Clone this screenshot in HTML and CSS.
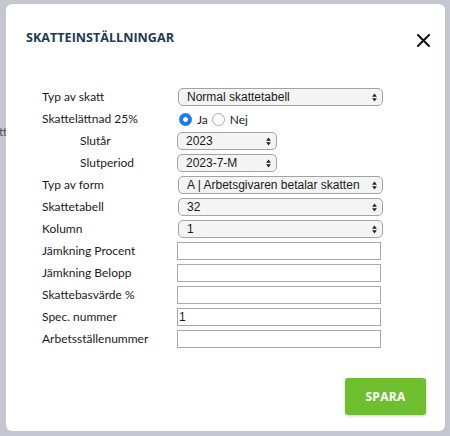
FILE: index.html
```html
<!DOCTYPE html>
<html lang="sv">
<head>
<meta charset="utf-8">
<title>Skatteinställningar</title>
<link rel="stylesheet" href="styles.css">
</head>
<body>
<span class="behind">tt</span>
<div class="modal">
  <div class="modal-header">
    <h2 class="modal-title">SKATTEINSTÄLLNINGAR</h2>
    <button class="close" type="button" aria-label="Stäng">
      <svg width="13" height="13" viewBox="0 0 13 13"><path d="M1 1 L12 12 M12 1 L1 12" stroke="#111" stroke-width="2" stroke-linecap="square" fill="none"/></svg>
    </button>
  </div>
  <form class="form">
    <label class="lbl">Typ av skatt</label>
    <div class="sel wide"><select><option>Normal skattetabell</option></select><svg class="arr" width="5" height="9" viewBox="0 0 5 9"><path d="M0.1 3.7 L2.5 0.5 L4.9 3.7Z M0.1 5.3 L2.5 8.5 L4.9 5.3Z" fill="#222"/></svg></div>

    <label class="lbl">Skattelättnad 25%</label>
    <div class="radios">
      <label class="radio"><input type="radio" name="r" checked> Ja</label>
      <label class="radio"><input type="radio" name="r"> Nej</label>
    </div>

    <label class="lbl sub">Slutår</label>
    <div class="sel short"><select><option>2023</option></select><svg class="arr" width="5" height="9" viewBox="0 0 5 9"><path d="M0.1 3.7 L2.5 0.5 L4.9 3.7Z M0.1 5.3 L2.5 8.5 L4.9 5.3Z" fill="#222"/></svg></div>

    <label class="lbl sub">Slutperiod</label>
    <div class="sel short"><select><option>2023-7-M</option></select><svg class="arr" width="5" height="9" viewBox="0 0 5 9"><path d="M0.1 3.7 L2.5 0.5 L4.9 3.7Z M0.1 5.3 L2.5 8.5 L4.9 5.3Z" fill="#222"/></svg></div>

    <label class="lbl">Typ av form</label>
    <div class="sel wide"><select><option>A | Arbetsgivaren betalar skatten</option></select><svg class="arr" width="5" height="9" viewBox="0 0 5 9"><path d="M0.1 3.7 L2.5 0.5 L4.9 3.7Z M0.1 5.3 L2.5 8.5 L4.9 5.3Z" fill="#222"/></svg></div>

    <label class="lbl">Skattetabell</label>
    <div class="sel wide"><select><option>32</option></select><svg class="arr" width="5" height="9" viewBox="0 0 5 9"><path d="M0.1 3.7 L2.5 0.5 L4.9 3.7Z M0.1 5.3 L2.5 8.5 L4.9 5.3Z" fill="#222"/></svg></div>

    <label class="lbl">Kolumn</label>
    <div class="sel wide"><select><option>1</option></select><svg class="arr" width="5" height="9" viewBox="0 0 5 9"><path d="M0.1 3.7 L2.5 0.5 L4.9 3.7Z M0.1 5.3 L2.5 8.5 L4.9 5.3Z" fill="#222"/></svg></div>

    <label class="lbl">Jämkning Procent</label>
    <input class="txt" type="text" value="">

    <label class="lbl">Jämkning Belopp</label>
    <input class="txt" type="text" value="">

    <label class="lbl">Skattebasvärde %</label>
    <input class="txt" type="text" value="">

    <label class="lbl">Spec. nummer</label>
    <input class="txt" type="text" value="1">

    <label class="lbl">Arbetsställenummer</label>
    <input class="txt" type="text" value="">
  </form>
  <div class="modal-footer">
    <button class="save" type="button">SPARA</button>
  </div>
</div>
</body>
</html>
```
FILE: styles.css
```css
html, body {
  margin: 0;
  padding: 0;
}
body {
  background: #c4c7d0;
  width: 450px;
  height: 436px;
  position: relative;
  overflow: hidden;
  font-family: "Lato", "Open Sans", sans-serif;
}
.behind {
  position: absolute;
  left: -1px;
  top: 124px;
  font-size: 12px;
  line-height: 16px;
  color: #4d5059;
  white-space: nowrap;
}
.modal {
  position: absolute;
  left: 6px;
  top: 4px;
  width: 439px;
  height: 427px;
  background: #fff;
  border-radius: 6px;
  display: flex;
  flex-direction: column;
  box-sizing: border-box;
}
.modal-header {
  display: flex;
  justify-content: space-between;
  align-items: flex-start;
  margin-top: 24px;
  padding: 0 15px 0 20px;
}
.modal-title {
  margin: 0;
  font-family: "Open Sans", sans-serif;
  font-size: 12.6px;
  line-height: 20px;
  font-weight: 700;
  color: #1d3a52;
}
.close {
  border: 0;
  background: none;
  padding: 0;
  margin-top: 6px;
  width: 13px;
  height: 13px;
  display: block;
}
.close svg { display: block; }
.form {
  margin-top: 40px;
  padding-left: 36px;
  display: grid;
  grid-template-columns: 135px auto;
  grid-auto-rows: 18px;
  row-gap: 4px;
  align-items: center;
}
.lbl {
  font-size: 12px;
  color: #1a1a1a;
  line-height: 18px;
  white-space: nowrap;
}
.lbl.sub { padding-left: 38px; }
.sel {
  position: relative;
  height: 18px;
}
.sel.wide { width: 205px; margin-left: 1px; }
.sel.short { width: 100px; }
.sel select {
  -webkit-appearance: none;
  appearance: none;
  width: 100%;
  height: 18px;
  box-sizing: border-box;
  border: 1px solid #a3a3a3;
  border-radius: 5px;
  background: #f4f4f4;
  font-family: "Liberation Sans", Arial, sans-serif;
  font-size: 12px;
  line-height: 16px;
  color: #1a1a1a;
  padding: 0 0 0 8px;
  margin: 0;
  display: block;
}
.sel .arr {
  position: absolute;
  right: 6px;
  top: 4.5px;
  pointer-events: none;
}
.radios {
  display: flex;
  align-items: center;
  gap: 4px;
  margin-left: 2px;
  font-size: 12px;
  color: #1a1a1a;
}
.radio {
  display: flex;
  align-items: center;
  gap: 5px;
}
.radio input {
  -webkit-appearance: none;
  appearance: none;
  margin: 0;
  width: 13px;
  height: 13px;
  border-radius: 50%;
  border: 1px solid #a8a8a8;
  background: #fff;
  box-sizing: border-box;
}
.radio input:checked {
  border: 0;
  background: radial-gradient(circle, #fff 0 2.1px, #1a7cf3 2.6px);
}
.txt {
  width: 204px;
  height: 18px;
  box-sizing: border-box;
  border: 1px solid #a9a9a9;
  border-radius: 0;
  padding: 0 1px;
  margin: 0;
  font-family: "Liberation Sans", Arial, sans-serif;
  font-size: 12px;
  color: #1a1a1a;
  background: #fff;
}
.modal-footer {
  display: flex;
  justify-content: flex-end;
  padding-right: 19px;
  margin-top: 30px;
}
.save {
  width: 81px;
  height: 37px;
  border: 0;
  border-radius: 3px;
  background: #6dbf2d;
  color: #fff;
  font-family: "Open Sans", sans-serif;
  font-weight: 700;
  font-size: 12px;
  letter-spacing: 0.3px;
  box-shadow: 0 1px 3px rgba(0,0,0,0.2);
}
```
